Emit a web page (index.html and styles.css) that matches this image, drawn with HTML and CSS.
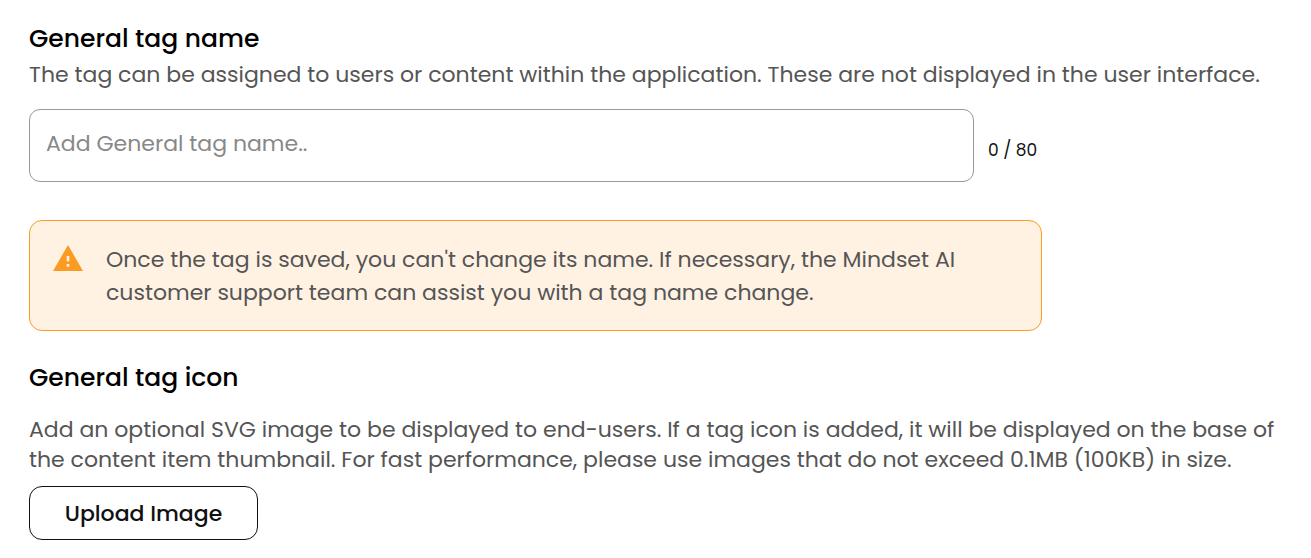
FILE: index.html
```html
<!DOCTYPE html>
<html lang="en">
<head>
<meta charset="utf-8">
<title>General tag</title>
<link rel="stylesheet" href="styles.css">
</head>
<body>
<form class="form">
  <section>
    <label class="title" for="tag-name">General tag name</label>
    <p class="hint" id="name-hint">The tag can be assigned to users or content within the application. These are not displayed in the user interface.</p>
    <div class="field">
      <input class="input" id="tag-name" type="text" maxlength="80" placeholder="Add General tag name.." aria-describedby="name-hint">
      <span class="counter">0 / 80</span>
    </div>
    <div class="notice" role="note">
      <svg class="notice-icon" viewBox="0 0 30 26" aria-hidden="true"><path fill="#fb9b24" d="M15 0 30 26H0Z"/><path stroke="#fff2e3" stroke-width="2.6" d="M15 11v5.2M15 19v2.8"/></svg>
      <p class="notice-text">Once the tag is saved, you can't change its name. If necessary, the Mindset AI<br>customer support team can assist you with a tag name change.</p>
    </div>
  </section>
  <section class="icon-section">
    <h2 class="title">General tag icon</h2>
    <p class="hint icon-hint">Add an optional SVG image to be displayed to end-users. If a tag icon is added, it will be displayed on the base of<br>the content item thumbnail. For fast performance, please use images that do not exceed 0.1MB (100KB) in size.</p>
    <button class="upload" type="button">Upload Image</button>
  </section>
</form>
</body>
</html>
```
FILE: styles.css
```css
* { box-sizing: border-box; }
body {
  margin: 0;
  background: #fff;
  color: #555;
  font-family: Poppins, Inter, sans-serif;
  font-size: 22px;
  font-weight: 400;
}
p, h2 { margin: 0; }
.form { padding: 20px 28px 17px 29px; }
.title { display: block; color: #000; font-size: 25px; font-weight: 500; line-height: 38px; }
.hint { padding-top: 2px; line-height: 30px; white-space: nowrap; }
.field { display: flex; align-items: center; gap: 14px; margin-top: 19px; }
.input {
  flex: 0 1 945px;
  min-width: 0;
  height: 73px;
  padding: 0 16px 4px;
  border: 1px solid #999;
  border-radius: 11px;
  background: #fff;
  font: inherit;
}
.input::placeholder { color: #888; opacity: 1; }
.counter { padding-top: 9px; color: #111; font-size: 17px; }
.notice {
  display: flex;
  gap: 23px;
  max-width: 1013px;
  margin-top: 38px;
  padding: 22px 23px 21px;
  border: 1px solid #fb9b24;
  border-radius: 13px;
  background: #fff2e3;
}
.notice-icon { flex: none; width: 30px; height: 26px; margin-top: 2px; }
.notice-text { line-height: 33px; white-space: nowrap; }
.icon-section { margin-top: 28px; }
.icon-hint { margin-top: 16px; }
.upload {
  min-width: 229px;
  height: 54px;
  margin-top: 11px;
  border: 1px solid #111;
  border-radius: 13px;
  background: #fff;
  color: #111;
  font: inherit;
  font-weight: 500;
}
```
